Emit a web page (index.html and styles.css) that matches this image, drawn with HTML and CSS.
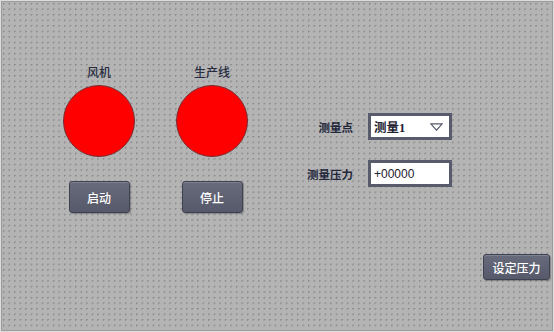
FILE: index.html
```html
<!DOCTYPE html>
<html lang="zh">
<head>
  <meta charset="UTF-8">
  <title>风机控制</title>
  <link rel="stylesheet" href="styles.css">
</head>
<body>
  <div class="panel">
    <div class="lamps">
      <div class="unit">
        <div class="unit-label">风机</div>
        <div class="lamp"></div>
        <button type="button" class="hmi-btn unit-btn">启动</button>
      </div>
      <div class="unit">
        <div class="unit-label">生产线</div>
        <div class="lamp"></div>
        <button type="button" class="hmi-btn unit-btn">停止</button>
      </div>
    </div>
    <div class="form">
      <label class="form-label" for="point">测量点</label>
      <div class="field select" id="point">
        <span class="select-text">测量1</span>
        <svg class="select-arrow" width="13" height="8" viewBox="0 0 13 8">
          <path d="M0.8 0.8 L12.2 0.8 L6.5 7.2 Z" fill="none" stroke="#555a6a" stroke-width="1.2"/>
        </svg>
      </div>
      <label class="form-label" for="pressure">测量压力</label>
      <div class="field input" id="pressure">+00000</div>
    </div>
    <button type="button" class="hmi-btn set-btn">设定压力</button>
  </div>
</body>
</html>
```

FILE: styles.css
```css
html, body {
  margin: 0;
  padding: 0;
}
body {
  width: 554px;
  height: 332px;
  overflow: hidden;
  font-family: "Noto Sans CJK SC", "Noto Sans", sans-serif;
}
.panel {
  width: 554px;
  height: 332px;
  box-sizing: border-box;
  border: 1px solid #dcdcdc;
  box-shadow: inset 0 0 0 1px #9c9c9c;
  background-color: #b4b4b4;
  background-image: radial-gradient(circle at 1.5px 1.5px, #888 0.8px, transparent 1px);
  background-size: 5.56px 5.56px;
  background-position: 1px 1px;
  display: flex;
  align-items: flex-start;
}
.lamps {
  display: flex;
  gap: 33px;
  margin-left: 58px;
  margin-top: 63px;
}
.unit {
  width: 80px;
  display: flex;
  flex-direction: column;
  align-items: center;
}
.unit-label {
  font-size: 12px;
  line-height: 16px;
  color: #262b40;
  height: 16px;
  font-weight: 500;
}
.lamp {
  width: 70px;
  height: 70px;
  margin-top: 5px;
  border-radius: 50%;
  background: #ff0000;
  border: 1px solid #7b2a30;
}
.hmi-btn {
  font-family: "Noto Sans CJK SC", "Noto Sans", sans-serif;
  font-size: 12px;
  font-weight: 500;
  color: #fff;
  background: linear-gradient(#686b7c, #565969);
  border: 1px solid #3e4150;
  border-radius: 3px;
  box-shadow: 1px 1px 1px rgba(0,0,0,0.25), inset 0 1px 0 rgba(255,255,255,0.15);
  padding: 0;
}
.unit-btn {
  width: 61px;
  height: 32px;
  margin-top: 24px;
}
.form {
  display: grid;
  grid-template-columns: 52px 84px;
  column-gap: 15px;
  row-gap: 20px;
  margin-left: 49px;
  margin-top: 112px;
  align-items: center;
}
.form-label {
  font-size: 11.5px;
  font-weight: bold;
  color: #23283c;
  text-align: right;
  white-space: nowrap;
}
.field {
  box-sizing: border-box;
  width: 84px;
  height: 27px;
  border: 3px solid #575b6c;
  background: #fff;
  display: flex;
  align-items: center;
  padding: 0 4px 0 3px;
  font-size: 12px;
  color: #1d2030;
}
.select {
  justify-content: space-between;
}
.select-text {
  font-family: "Liberation Serif", "Noto Sans CJK SC", serif;
  font-size: 12.5px;
  font-weight: bold;
}
.select-arrow {
  margin-right: 2px;
}
.input {
  font-family: "Liberation Sans", Arial, sans-serif;
  font-size: 12px;
}
.set-btn {
  width: 67px;
  height: 26px;
  align-self: flex-end;
  margin-left: auto;
  margin-right: 3px;
  margin-bottom: 51px;
}
```
